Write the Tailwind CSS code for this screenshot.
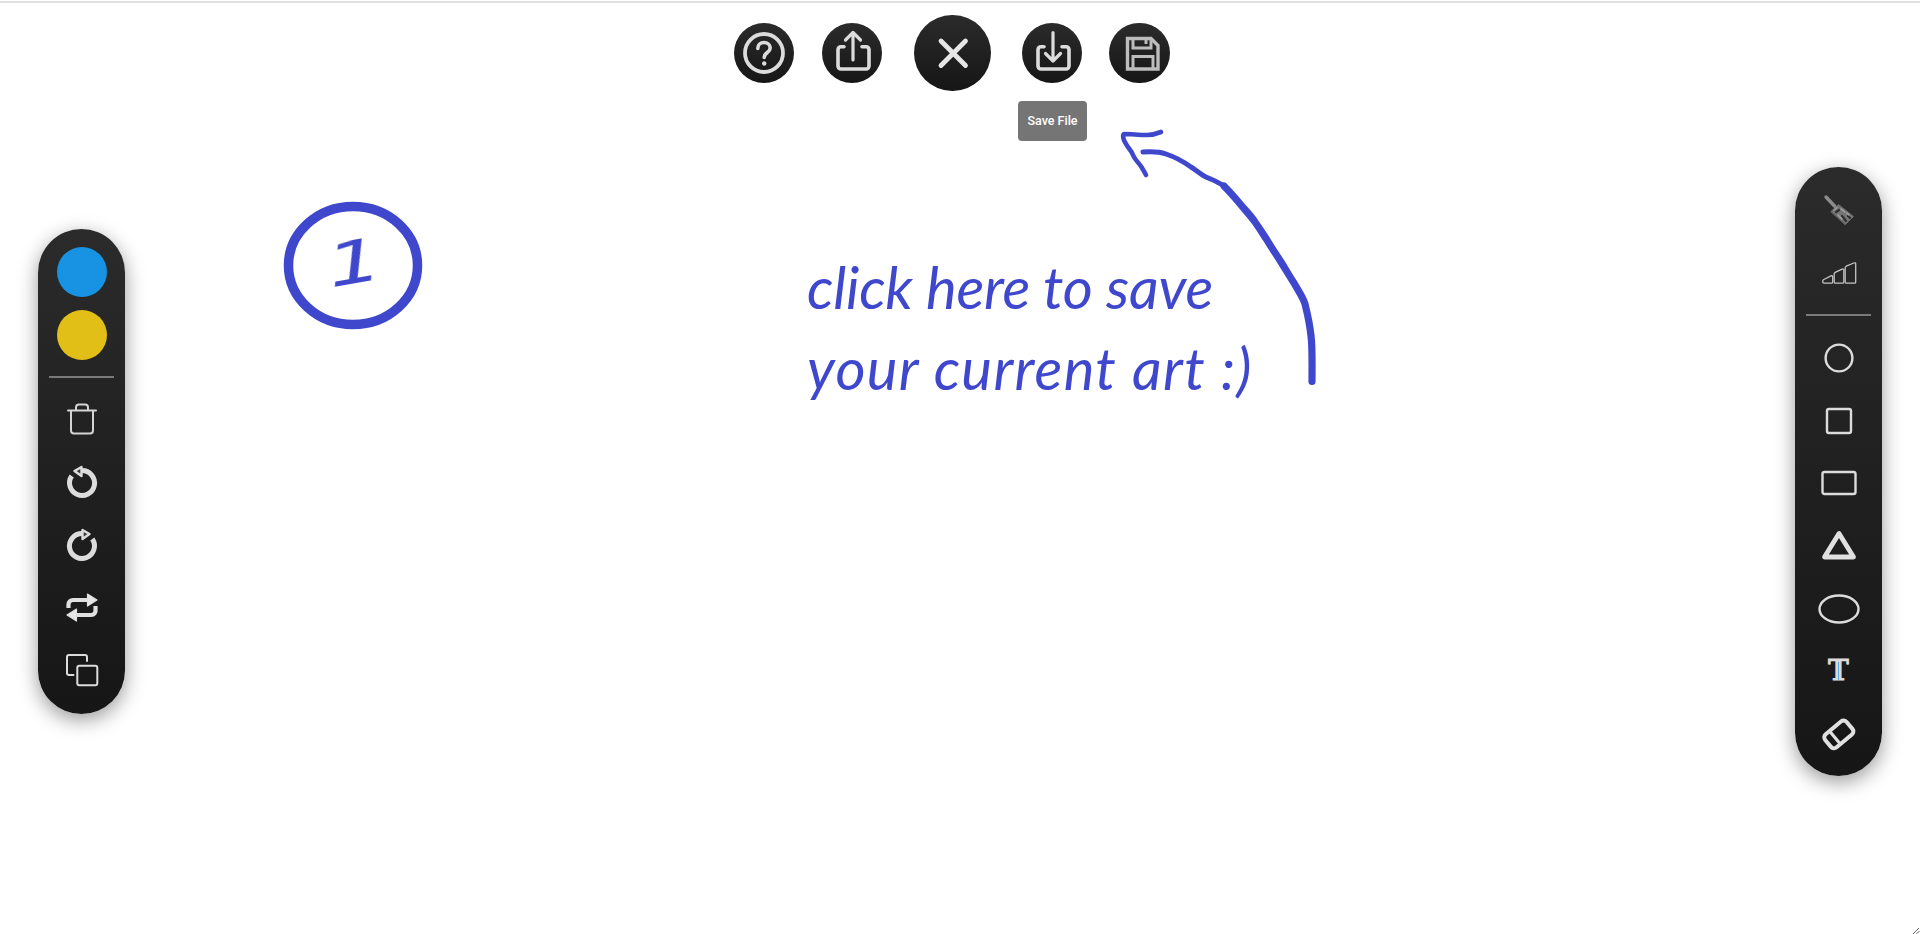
<!doctype html>
<html>
<head>
<meta charset="utf-8">
<script src="https://cdn.jsdelivr.net/npm/@tailwindcss/browser@4"></script>
</head>
<body class="bg-white">
<div class="relative w-[1920px] h-[934px] overflow-hidden bg-white font-['Roboto',sans-serif]">
  <div class="absolute left-0 top-[1px] w-full h-[2px] bg-[#e0e0e0]"></div>

  <!-- drawing canvas content -->
  <svg class="absolute left-0 top-0 w-[1920px] h-[934px]" viewBox="0 0 1920 934" fill="none" stroke="#3f48cc" stroke-linecap="round" stroke-linejoin="round">
    <ellipse cx="353" cy="265.5" rx="64.5" ry="59" stroke-width="9.5"/>
    <path stroke-width="5" d="M1143 152C1150 151.5 1159 151.5 1166 154C1175 157 1184 162 1191 167C1196 170 1199 173 1204 176C1210 179 1217 181 1224 186"/>
    <path stroke-width="7.2" d="M1224 186C1231 193 1236 199 1241 205C1246 211 1251 216 1255 222C1260 229 1263 234 1267 240C1271 247 1276 254 1281 262C1286 270 1290 277 1294 283C1299 292 1303 297 1305 304C1308 316 1310 326 1311 336C1312.5 346 1312 365 1312 381.5"/>
    <path stroke-width="4.6" d="M1161 132C1156 134 1153 135 1147 135C1139 135 1131 134 1124 134C1122 136 1124 141 1126 144C1128 148 1132 151 1133 155C1135 160 1140 164 1142 168C1144 171 1145 173 1146 175"/>
  </svg>
  <div class="absolute left-[807px] top-[257px] text-[58px] leading-[60px] tracking-[-0.2px] italic font-['Lato',sans-serif] text-[#3f48cc] whitespace-nowrap">click here to save</div>
  <div class="absolute left-[807px] top-[338px] text-[58px] leading-[60px] tracking-[1.3px] italic font-['Lato',sans-serif] text-[#3f48cc] whitespace-nowrap">your current art :)</div>
  <div class="absolute left-[336px] top-[228px] text-[58px] leading-[70px] italic font-['DejaVu_Sans',sans-serif] text-[#3f48cc] -rotate-[10deg] scale-x-150 blur-[0.5px]">1</div>

  <!-- top toolbar -->
  <div class="absolute left-0 top-[15px] w-full flex items-center justify-center pr-[16px]">
    <button class="w-[60px] h-[60px] rounded-full bg-gradient-to-b from-[#2b2b2b] to-[#161616] flex items-center justify-center">
      <svg class="w-[60px] h-[60px]" viewBox="0 0 60 60" fill="none" stroke="#dcdcdc" stroke-linecap="round" stroke-linejoin="round">
        <circle cx="30" cy="30" r="19" stroke-width="3.8"/>
        <path stroke-width="3.6" d="M23.8 25.5C23.8 21.8 26.6 19.5 30 19.5C33.4 19.5 36.2 21.8 36.2 25C36.2 29.5 30.2 29.5 30.2 34.5"/>
        <circle cx="30.2" cy="40.5" r="2.2" fill="#dcdcdc" stroke="none"/>
      </svg>
    </button>
    <button class="ml-[28px] w-[60px] h-[60px] rounded-full bg-gradient-to-b from-[#2b2b2b] to-[#161616] flex items-center justify-center">
      <svg class="w-[60px] h-[60px]" viewBox="0 0 60 60" fill="none" stroke="#dcdcdc" stroke-linecap="round" stroke-linejoin="round">
        <path stroke-width="3.6" d="M22 23.7H19A3 3 0 0 0 16 26.7V43A3 3 0 0 0 19 46H44A3 3 0 0 0 47 43V26.7A3 3 0 0 0 44 23.7H40"/>
        <path stroke-width="3.2" d="M31 37V9.5M23.5 17L31 9.5L38.5 17"/>
      </svg>
    </button>
    <button class="ml-[32px] w-[77px] h-[76px] rounded-full bg-gradient-to-b from-[#2b2b2b] to-[#161616] flex items-center justify-center">
      <svg class="w-[76px] h-[76px]" viewBox="0 0 76 76" fill="none" stroke="#e6e6e6" stroke-linecap="round">
        <path stroke-width="4.8" d="M26 26L50.5 50.5M50.5 26L26 50.5"/>
      </svg>
    </button>
    <button class="ml-[31px] w-[60px] h-[60px] rounded-full bg-gradient-to-b from-[#2b2b2b] to-[#161616] flex items-center justify-center">
      <svg class="w-[60px] h-[60px]" viewBox="0 0 60 60" fill="none" stroke="#dcdcdc" stroke-linecap="round" stroke-linejoin="round">
        <path stroke-width="3.6" d="M22 23.7H19A3 3 0 0 0 16 26.7V43A3 3 0 0 0 19 46H44A3 3 0 0 0 47 43V26.7A3 3 0 0 0 44 23.7H40"/>
        <path stroke-width="3.2" d="M31 9.5V38M23.5 30.5L31 38L38.5 30.5"/>
      </svg>
    </button>
    <button class="ml-[27px] w-[61px] h-[60px] rounded-full bg-gradient-to-b from-[#2b2b2b] to-[#161616] flex items-center justify-center">
      <svg class="w-[60px] h-[60px]" viewBox="0 0 60 60" fill="none" stroke="#bdbdbd" stroke-linejoin="miter">
        <path stroke-width="3.4" d="M17.5 15.5H41L48 22.5V46H17.5Z"/>
        <path stroke-width="3" d="M23 16V25H41V16"/>
        <path stroke-width="3" d="M23 46V33.5H43V46"/>
        <path stroke-width="3" d="M36 16.5V21"/>
      </svg>
    </button>
  </div>

  <!-- tooltip -->
  <div class="absolute left-[1018px] top-[101px] w-[69px] h-[40px] rounded-[4px] bg-[#757575] text-white text-[12.5px] font-medium flex items-center justify-center">Save File</div>

  <!-- left panel -->
  <div class="absolute left-[38px] top-[229px] w-[87px] h-[485px] rounded-[43.5px] bg-gradient-to-b from-[#2b2b2b] to-[#161616] shadow-[0_6px_20px_rgba(0,0,0,0.4)] flex flex-col items-center pt-[12px]">
    <div class="h-[62.5px] flex items-center justify-center"><div class="w-[50px] h-[50px] rounded-full bg-[#1893e4]"></div></div>
    <div class="h-[62.5px] flex items-center justify-center"><div class="w-[50px] h-[50px] rounded-full bg-[#e1bf17]"></div></div>
    <div class="w-[65px] h-[2px] bg-[#7a7a7a] mt-[10px] mb-[10px]"></div>
    <div class="h-[62.7px] flex items-center justify-center">
      <svg class="w-9 h-9" viewBox="0 0 36 36" fill="none" stroke="#d4d4d4" stroke-linecap="round" stroke-linejoin="round">
        <path stroke-width="2" d="M4 9.5H32M7 9.5V29.5A3 3 0 0 0 10 32.5H26A3 3 0 0 0 29 29.5V9.5M12 9.5V6.5A3 3 0 0 1 15 3.5H21A3 3 0 0 1 24 6.5V9.5"/>
      </svg>
    </div>
    <div class="h-[62.7px] flex items-center justify-center">
      <svg class="w-9 h-9" viewBox="0 0 36 36" fill="none" stroke="#dcdcdc" stroke-linejoin="round">
        <path stroke-width="5" d="M18 6.5A12.5 12.5 0 1 1 7.7 12"/>
        <path stroke-width="2.4" fill="#3a3a3a" d="M17.5 3V12L10.5 7Z"/>
      </svg>
    </div>
    <div class="h-[62.7px] flex items-center justify-center">
      <svg class="w-9 h-9" viewBox="0 0 36 36" fill="none" stroke="#dcdcdc" stroke-linejoin="round">
        <path stroke-width="5" d="M18 6.5A12.5 12.5 0 1 0 28.3 12"/>
        <path stroke-width="2.4" fill="#3a3a3a" d="M18.5 3V12L25.5 7Z"/>
      </svg>
    </div>
    <div class="h-[62.7px] flex items-center justify-center">
      <svg class="w-9 h-9" viewBox="0 0 36 36" fill="none" stroke="#e0e0e0" stroke-linejoin="round">
        <path stroke-width="4.2" d="M4.5 19V15.5A4.5 4.5 0 0 1 9 11H24M31.5 17V20.5A4.5 4.5 0 0 1 27 26H12"/>
        <path stroke-width="1.2" fill="#e6e6e6" d="M23.5 5L33 11L23.5 17ZM12.5 20L3 26L12.5 32Z"/>
      </svg>
    </div>
    <div class="h-[62.7px] flex items-center justify-center">
      <svg class="w-9 h-9" viewBox="0 0 36 36" fill="none" stroke="#dcdcdc" stroke-linecap="round" stroke-linejoin="round">
        <path stroke-width="2" d="M23 9V5A2 2 0 0 0 21 3H5A2 2 0 0 0 3 5V21A2 2 0 0 0 5 23H9.5"/>
        <rect x="13.3" y="13.7" width="20" height="19.6" rx="2" stroke-width="2"/>
      </svg>
    </div>
  </div>

  <!-- right panel -->
  <div class="absolute left-[1795px] top-[167px] w-[87px] h-[609px] rounded-[43.5px] bg-gradient-to-b from-[#2b2b2b] to-[#161616] shadow-[0_6px_20px_rgba(0,0,0,0.4)] flex flex-col items-center pt-[12px]">
    <div class="h-[62.5px] flex items-center justify-center">
      <svg class="w-9 h-9" viewBox="0 0 36 36" fill="none" stroke-linecap="round" stroke-linejoin="round">
        <path stroke="#8c8c8c" stroke-width="3.4" d="M5 5L14 14.5"/>
        <path fill="#757575" stroke="#6a6a6a" stroke-width="1" d="M10 19.5L17.5 12.5L32.5 24.5L24.5 32.5Z"/>
        <path stroke="#2f2f2f" stroke-width="2.2" d="M15 20L18 18M21 24L25 29M27 24L29 26"/>
        <path stroke="#a5a5a5" stroke-width="1.4" d="M13 18L16 15.5M20 17L24 20M17 23L21 27M26 21L28 23"/>
      </svg>
    </div>
    <div class="h-[62.5px] flex items-center justify-center">
      <svg class="w-9 h-9" viewBox="0 0 36 36" fill="none" stroke="#c4c4c4" stroke-width="1.3" stroke-linejoin="round">
        <path d="M3 28.2Q1.8 28.2 1.8 27V25.8Q1.8 25 2.8 24.5L10 20.9Q11.7 20.3 11.7 22V27Q11.7 28.2 10.5 28.2Z"/>
        <path d="M14.5 28.2Q13.2 28.2 13.2 27V18.8Q13.2 18 14.2 17.4L21 14.2Q22.8 13.6 22.8 15.2V27Q22.8 28.2 21.6 28.2Z"/>
        <path d="M25.5 28.2Q24.2 28.2 24.2 27V12.6Q24.2 11.8 25.2 11.2L32.8 8Q34.7 7.4 34.7 9V27Q34.7 28.2 33.5 28.2Z"/>
      </svg>
    </div>
    <div class="w-[65px] h-[2px] bg-[#7a7a7a] mt-[10px] mb-[11px]"></div>
    <div class="h-[62.6px] flex items-center justify-center">
      <svg class="w-9 h-9" viewBox="0 0 36 36" fill="none" stroke="#dcdcdc"><circle cx="18" cy="18" r="13.4" stroke-width="2.4"/></svg>
    </div>
    <div class="h-[62.6px] flex items-center justify-center">
      <svg class="w-9 h-9" viewBox="0 0 36 36" fill="none" stroke="#dcdcdc"><rect x="6" y="6" width="24" height="24" rx="2" stroke-width="2.4"/></svg>
    </div>
    <div class="h-[62.6px] flex items-center justify-center">
      <svg class="w-9 h-9" viewBox="0 0 36 36" fill="none" stroke="#dcdcdc"><rect x="1.5" y="7" width="33" height="22" rx="2" stroke-width="2.4"/></svg>
    </div>
    <div class="h-[62.6px] flex items-center justify-center">
      <svg class="w-9 h-9" viewBox="0 0 36 36" fill="none" stroke="#e0e0e0" stroke-linejoin="round"><path stroke-width="4.8" d="M18 5.5L3.5 29H32.5Z"/></svg>
    </div>
    <div class="h-[62.6px] flex items-center justify-center">
      <svg class="w-[44px] h-9" viewBox="0 0 44 36" fill="none" stroke="#dcdcdc"><ellipse cx="22" cy="18" rx="19.5" ry="13.5" stroke-width="2.4"/></svg>
    </div>
    <div class="h-[62.6px] flex items-center justify-center">
      <div class="relative w-9 h-9 flex items-center justify-center font-['DejaVu_Serif',serif] font-bold text-[28px] leading-none text-[#dcdcdc] [-webkit-text-stroke:0.8px_#dcdcdc]">T<span class="absolute left-[17.5px] top-[9px] w-[1px] h-[18px] bg-[#5aa9e6]"></span></div>
    </div>
    <div class="h-[62.6px] flex items-center justify-center">
      <svg class="w-9 h-9" viewBox="0 0 36 36" fill="none" stroke="#e0e0e0" stroke-linejoin="round" stroke-linecap="round">
        <g transform="translate(17.8 18.4) rotate(-40)">
          <rect x="-14" y="-8.5" width="28" height="17" rx="4" stroke-width="4"/>
          <path stroke-width="3.2" d="M-5 -8V8"/>
        </g>
      </svg>
    </div>
  </div>

  <!-- resize handle -->
  <svg class="absolute right-0 bottom-0 w-[9px] h-[9px]" viewBox="0 0 9 9" fill="none" stroke="#666666" stroke-width="1"><path d="M2 9L8 3M5.5 9L8.5 6"/></svg>
</div>
</body>
</html>
